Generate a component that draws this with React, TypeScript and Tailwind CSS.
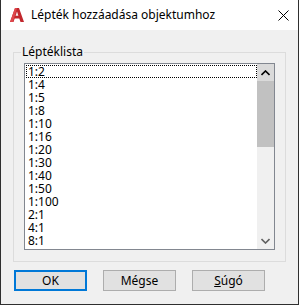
import React from "react";

const items = ["1:2","1:4","1:5","1:8","1:10","1:16","1:20","1:30","1:40","1:50","1:100","2:1","4:1","8:1"];

function Logo() {
  return (
    <svg width="16" height="16" viewBox="0 0 16 16">
      <polygon points="1,15 6,1 10,1 15,15 11.5,15 10.3,11.5 5.7,11.5 4.5,15" fill="#c1272d" />
      <polygon points="6.6,8.8 9.4,8.8 8,4.6" fill="#f3f3f3" />
      <polygon points="6,1 8,1 4,15 1,15" fill="#e0474c" />
    </svg>
  );
}

export default function App() {
  const font = { fontFamily: '"Segoe UI", "Noto Sans", sans-serif' };
  return (
    <div className="w-[299px] h-[305px] flex flex-col border-l border-r border-b border-[#2f2f2f] bg-[#f0f0f0] text-[12px] text-black" style={font}>
      <div className="h-[30px] bg-white flex items-center shrink-0">
        <div className="ml-[8px] mt-[-1px]"><Logo /></div>
        <div className="ml-[6px] text-[12px] leading-[16px] mt-[-1px]">Lépték hozzáadása objektumhoz</div>
        <div className="ml-auto mr-[9px]">
          <svg width="11" height="11" viewBox="0 0 11 11">
            <path d="M0.5 0.5 L10.5 10.5 M10.5 0.5 L0.5 10.5" stroke="#000" strokeWidth="1" />
          </svg>
        </div>
      </div>
      <div className="relative mt-[22px] ml-[12px] w-[273px] h-[210px] border border-[#dcdcdc] pt-[10px] pl-[10px]">
        <div className="absolute left-[7px] top-[-9px] px-[1px] bg-[#f0f0f0] leading-[16px]">Léptéklista</div>
        <div className="w-[251px] h-[187px] border border-[#828790] bg-white flex">
          <div className="flex-1 pt-[1px] pl-[1px]">
            {items.map((it, i) => (
              <div key={it} className={"h-[13px] leading-[13px] pl-[2px] " + (i === 0 ? "outline outline-1 outline-dotted outline-black -outline-offset-1" : "")}>{it}</div>
            ))}
          </div>
          <div className="w-[17px] bg-[#f0f0f0] flex flex-col">
            <div className="h-[17px] bg-[#dadada] flex items-center justify-center">
              <svg width="9" height="6" viewBox="0 0 9 6"><path d="M0.5 5 L4.5 1 L8.5 5" stroke="#000" strokeWidth="1.6" fill="none" /></svg>
            </div>
            <div className="h-[66px] bg-[#c1c1c1]" />
            <div className="flex-1" />
            <div className="h-[17px] flex items-center justify-center">
              <svg width="9" height="6" viewBox="0 0 9 6"><path d="M0.5 1 L4.5 5 L8.5 1" stroke="#606060" strokeWidth="1.6" fill="none" /></svg>
            </div>
          </div>
        </div>
      </div>
      <div className="flex mt-[8px] ml-[13px] gap-[16px]">
        <button className="w-[73px] h-[21px] border-2 border-[#0078d7] bg-[#e1e1e1] leading-[15px]">OK</button>
        <button className="w-[73px] h-[21px] border border-[#adadad] bg-[#e1e1e1] leading-[17px]">Mégse</button>
        <button className="w-[73px] h-[21px] border border-[#adadad] bg-[#e1e1e1] leading-[17px]"><span className="underline">S</span>úgó</button>
      </div>
    </div>
  );
}
